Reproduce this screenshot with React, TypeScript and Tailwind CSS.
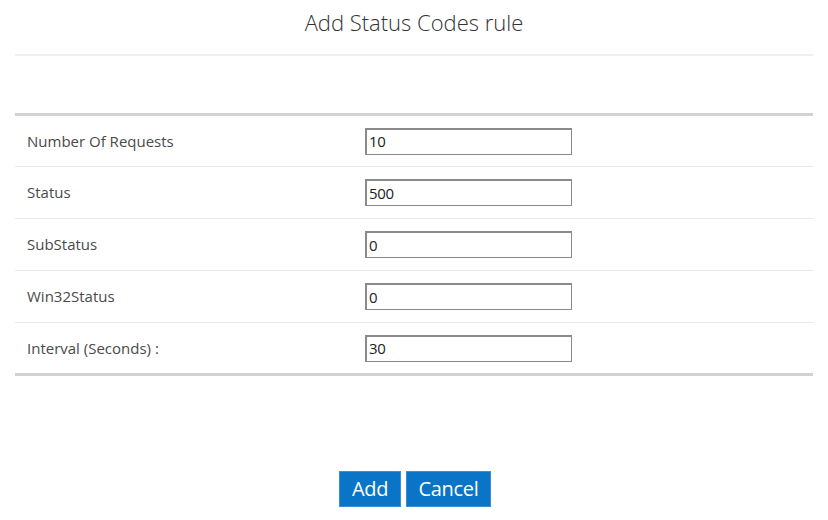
import React from "react";

const rows = [
  { label: "Number Of Requests", value: "10", h: "h-[51px]" },
  { label: "Status", value: "500", h: "h-[52px]" },
  { label: "SubStatus", value: "0", h: "h-[52px]" },
  { label: "Win32Status", value: "0", h: "h-[52px]" },
  { label: "Interval (Seconds) :", value: "30", h: "h-[50px]" },
];

export default function App() {
  return (
    <div
      className="w-[828px] h-[520px] bg-white flex flex-col"
      style={{ fontFamily: '"Open Sans", "Noto Sans", sans-serif' }}
    >
      <div className="mx-[15px] h-[56px] flex items-start justify-center border-b-2 border-[#efefef]">
        <h1 className="mt-[6px] text-[22px] leading-[32px] font-light text-[#333] tracking-[0px]">
          Add Status Codes rule
        </h1>
      </div>
      <div className="h-[57px]" />
      <div className="mx-[15px] border-t-[3px] border-b-[3px] border-[#d2d2d2]">
        {rows.map((r, i) => (
          <div
            key={r.label}
            className={`flex items-center ${r.h} ${i < rows.length - 1 ? "border-b border-[#e8e8e8]" : ""}`}
          >
            <div className="w-[350px] pl-[12px] text-[15px] text-[#4a4a4a] tracking-[0px]">
              {r.label}
            </div>
            <div className="w-[207px] h-[27px] border-2 border-[#8a8a8a] border-r border-b-[1px] pl-[2px] flex items-center text-[15px] text-[#222] tracking-[-0.3px]">
              {r.value}
            </div>
          </div>
        ))}
      </div>
      <div className="flex justify-center gap-[5px] mt-[95px] pl-[2px]">
        <button className="w-[62px] h-[36px] bg-[#0a74c7] border border-[#3d8fd4] text-white text-[20px] leading-none tracking-[-0.3px]">
          Add
        </button>
        <button className="w-[85px] h-[36px] bg-[#0a74c7] border border-[#3d8fd4] text-white text-[20px] leading-none tracking-[-0.3px]">
          Cancel
        </button>
      </div>
    </div>
  );
}
